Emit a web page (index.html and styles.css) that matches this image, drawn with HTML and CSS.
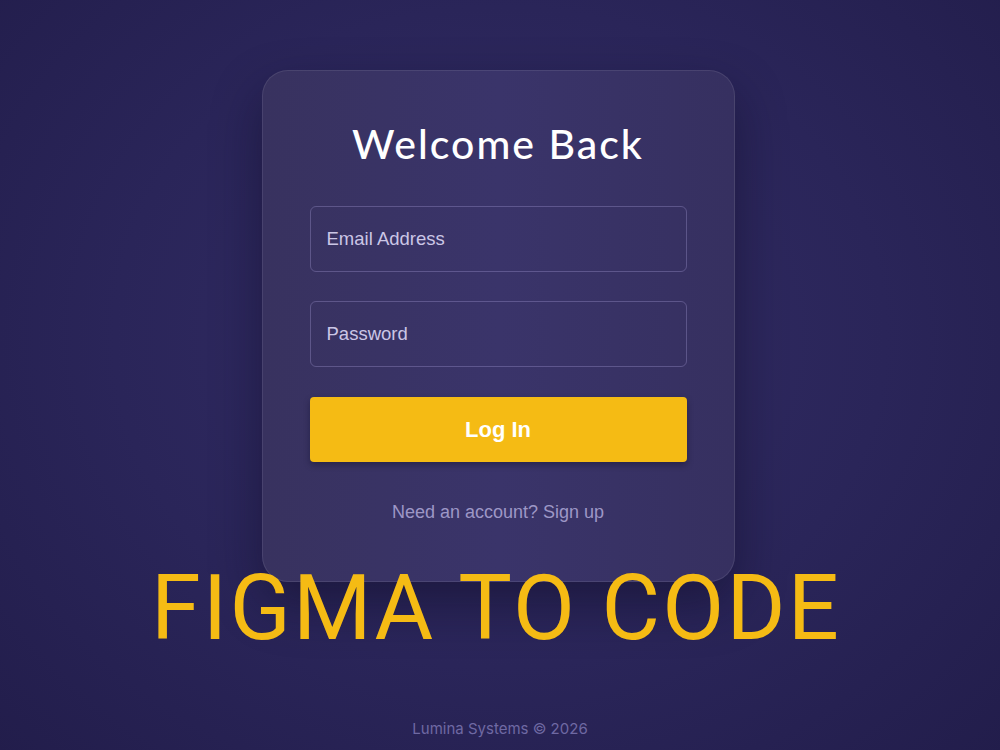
FILE: index.html
```html
<!DOCTYPE html>
<html lang="en">
<head>
<meta charset="utf-8">
<title>Welcome Back</title>
<link rel="stylesheet" href="styles.css">
</head>
<body>
  <main class="page">
    <section class="card">
      <h1 class="card-title">Welcome Back</h1>
      <form class="login-form">
        <input class="field" type="email" placeholder="Email Address">
        <input class="field" type="password" placeholder="Password">
        <button class="btn-primary" type="button">Log In</button>
      </form>
      <p class="signup">Need an account? Sign up</p>
    </section>
    <div class="banner">FIGMA TO CODE</div>
  </main>
  <footer class="footer">Lumina Systems © 2026</footer>
</body>
</html>
```

FILE: styles.css
```css
* { box-sizing: border-box; }

html, body {
  margin: 0;
  height: 100%;
}

body {
  width: 1000px;
  height: 750px;
  overflow: hidden;
  position: relative;
  background: radial-gradient(ellipse 70% 80% at 50% 45%, #332d66 0%, #2a2559 55%, #221d4b 100%);
  font-family: "Liberation Sans", Arial, sans-serif;
  display: flex;
  flex-direction: column;
  align-items: center;
}

.page {
  position: relative;
  padding-top: 70px;
  margin-right: 4px;
  display: flex;
  flex-direction: column;
  align-items: center;
}

.card {
  width: 473px;
  height: 512px;
  padding: 48px 47px 0;
  border-radius: 26px;
  background: linear-gradient(90deg, #38325f 0%, #3a346a 50%, #363060 100%);
  border: 1px solid rgba(255, 255, 255, 0.09);
  box-shadow: 0 22px 50px rgba(10, 8, 30, 0.45);
  display: flex;
  flex-direction: column;
  align-items: stretch;
}

.card-title {
  margin: 0 0 37px;
  text-align: center;
  color: #ffffff;
  font-family: "Lato", sans-serif;
  font-weight: 500;
  font-size: 41px;
  line-height: 50px;
  letter-spacing: 2px;
}

.login-form {
  display: flex;
  flex-direction: column;
  gap: 29px;
}

.field {
  height: 66px;
  padding: 0 16px;
  border: 1.5px solid rgba(190, 180, 240, 0.28);
  border-radius: 6px;
  background: transparent;
  color: #ffffff;
  font-family: "Liberation Sans", Arial, sans-serif;
  font-size: 18.5px;
  outline: none;
}

.field::placeholder {
  color: #cbc6e6;
}

.btn-primary {
  margin-top: 1px;
  height: 65px;
  border: none;
  border-radius: 4px;
  background: #f5bb14;
  color: #ffffff;
  font-family: "Liberation Sans", Arial, sans-serif;
  font-weight: 700;
  font-size: 22px;
  box-shadow: 0 3px 6px rgba(10, 8, 30, 0.35);
}

.signup {
  margin: 40px 0 0;
  text-align: center;
  color: #9d97c6;
  font-size: 18px;
}

.banner {
  position: absolute;
  left: 50%;
  top: 559px;
  transform: translateX(calc(-50% - 2px));
  white-space: nowrap;
  color: #f5bb14;
  font-family: "Roboto", sans-serif;
  font-weight: 400;
  font-size: 90px;
  line-height: 100px;
  letter-spacing: 2.2px;
}

.footer {
  position: absolute;
  bottom: 12px;
  left: 0;
  right: 0;
  text-align: center;
  color: #6f69a3;
  font-family: "Inter", sans-serif;
  font-size: 15px;
}
```
